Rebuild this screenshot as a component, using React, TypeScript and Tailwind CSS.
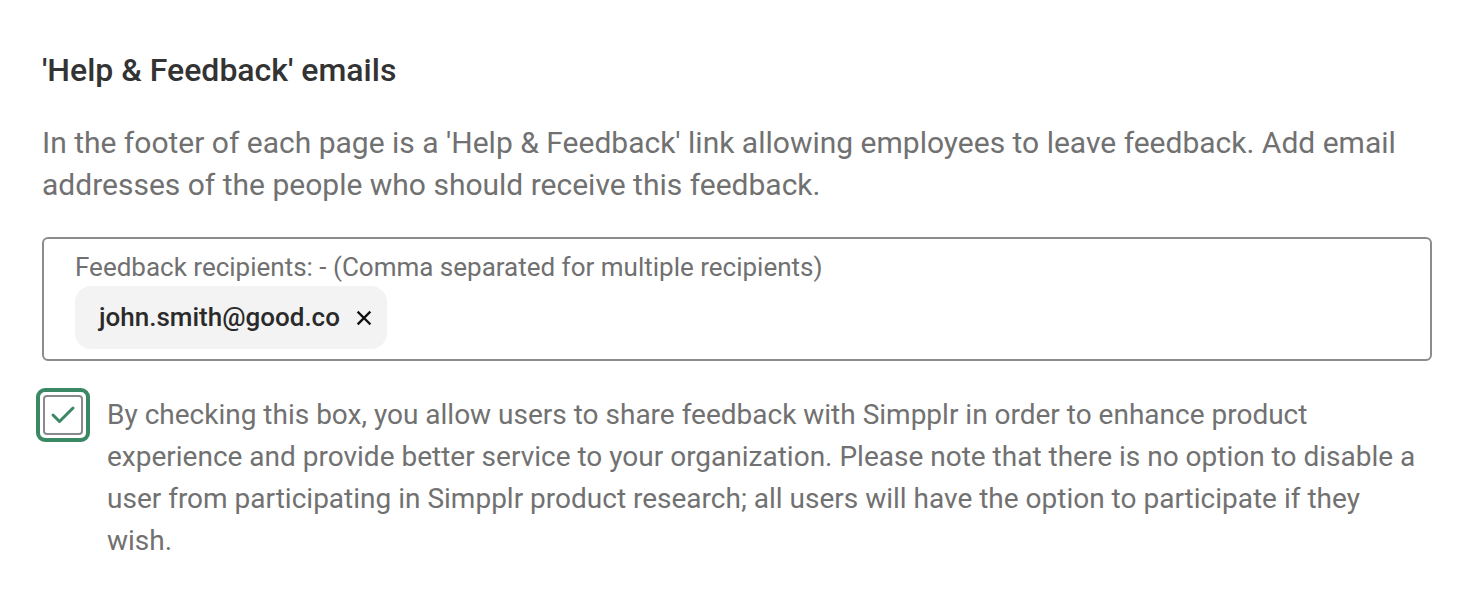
import React from "react";

export default function App() {
  return (
    <div className="min-h-[608px] w-[1474px] bg-white" style={{ fontFamily: "Roboto, 'Noto Sans', sans-serif" }}>
      <div className="pl-[42px] pr-[42px] pt-[50px]">
        <h2 className="text-[32px] leading-[40px] font-medium text-[#333333]">'Help &amp; Feedback' emails</h2>
        <p className="mt-[32px] w-[1390px] text-[30px] leading-[42px] text-[#717171]">
          In the footer of each page is a 'Help &amp; Feedback' link allowing employees to leave feedback. Add email addresses of the people who should receive this feedback.
        </p>
        <div className="mt-[31px] h-[124px] w-[1390px] rounded-[6px] border-2 border-[#8c8c8c] pl-[31px] pt-[14px]">
          <div className="text-[26px] leading-[28px] text-[#707070]">Feedback recipients: - (Comma separated for multiple recipients)</div>
          <div className="mt-[5px] inline-flex h-[63px] items-center gap-[16px] rounded-[16px] bg-[#f3f3f3] pl-[24px] pr-[15px]">
            <span className="text-[26px] font-medium text-[#2a2a2a]">john.smith@good.co</span>
            <svg width="16" height="16" viewBox="0 0 16 16" className="text-[#111]">
              <path d="M2.5 2.5 L13.5 13.5 M13.5 2.5 L2.5 13.5" stroke="currentColor" strokeWidth="2.4" strokeLinecap="square" />
            </svg>
          </div>
        </div>
        <div className="mt-[27px] flex items-start -ml-[6px]">
          <div className="flex h-[54px] w-[54px] shrink-0 items-center justify-center rounded-[9px] border-[4px] border-[#3a8864]">
            <div className="flex h-[40px] w-[40px] items-center justify-center rounded-[4px] border-2 border-[#8a8a8a] bg-white">
              <svg width="28" height="24" viewBox="0 0 28 24">
                <path d="M4 12 L10.5 18.5 L24 5" fill="none" stroke="#3a8864" strokeWidth="3" strokeLinecap="round" strokeLinejoin="round" />
              </svg>
            </div>
          </div>
          <p className="ml-[17px] mt-[6px] w-[1315px] text-[28px] leading-[42px] text-[#717171]">
            By checking this box, you allow users to share feedback with Simpplr in order to enhance product experience and provide better service to your organization. Please note that there is no option to disable a user from participating in Simpplr product research; all users will have the option to participate if they wish.
          </p>
        </div>
      </div>
    </div>
  );
}
